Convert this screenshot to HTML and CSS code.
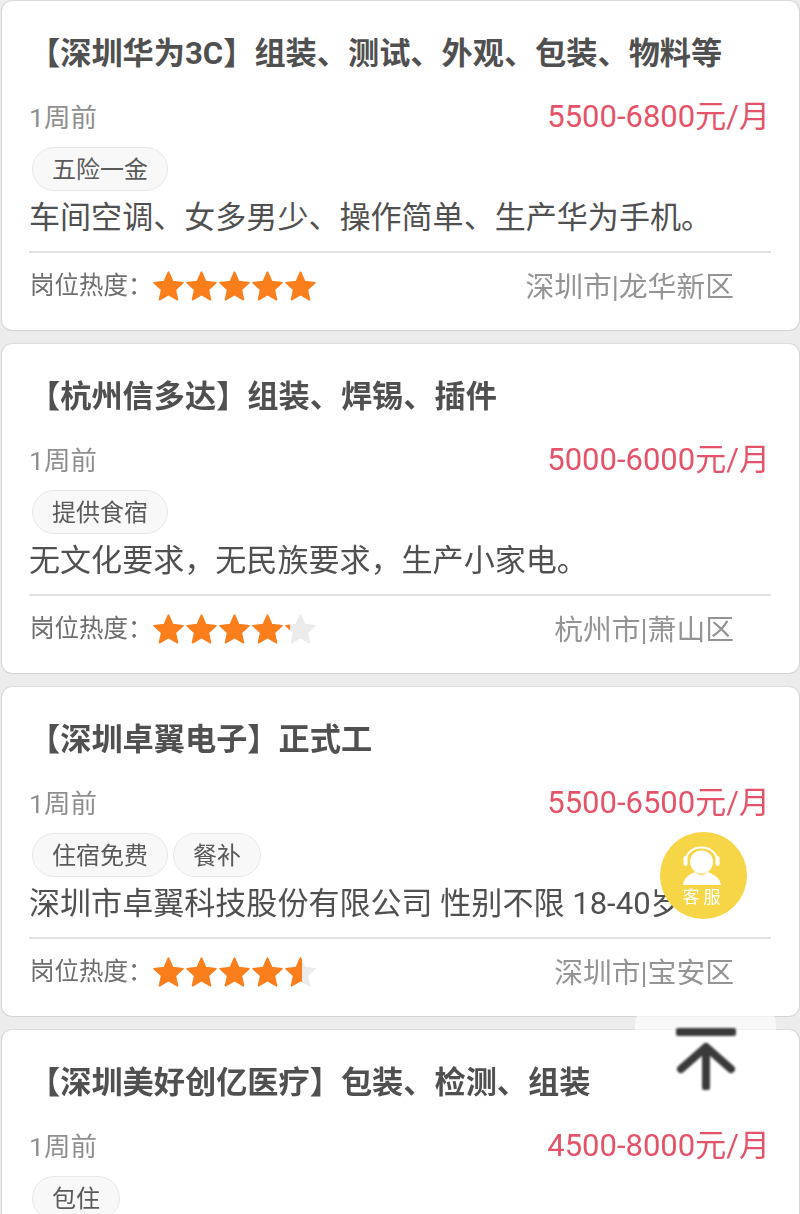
FILE: index.html
```html
<!DOCTYPE html>
<html lang="zh-CN">
<head>
<meta charset="utf-8">
<title>岗位列表</title>
<link rel="stylesheet" href="styles.css">
</head>
<body>
<main class="list">
  <article class="card">
    <h2 class="title">【深圳华为3C】组装、测试、外观、包装、物料等</h2>
    <div class="meta"><span class="time">1周前</span><span class="price">5500-6800元/月</span></div>
    <div class="tags"><span class="tag">五险一金</span></div>
    <p class="desc">车间空调、女多男少、操作简单、生产华为手机。</p>
    <div class="foot">
      <span class="heat">岗位热度：</span>
      <span class="stars"><svg class="star-row" viewBox="0 0 165 32"><use href="#row"/><g clip-path="url(#c100)"><use href="#row" class="on"/></g></svg></span>
      <span class="loc">深圳市|龙华新区</span>
    </div>
  </article>
  <article class="card">
    <h2 class="title">【杭州信多达】组装、焊锡、插件</h2>
    <div class="meta"><span class="time">1周前</span><span class="price">5000-6000元/月</span></div>
    <div class="tags"><span class="tag">提供食宿</span></div>
    <p class="desc">无文化要求，无民族要求，生产小家电。</p>
    <div class="foot">
      <span class="heat">岗位热度：</span>
      <span class="stars"><svg class="star-row" viewBox="0 0 165 32"><use href="#row"/><g clip-path="url(#c80)"><use href="#row" class="on"/></g></svg></span>
      <span class="loc">杭州市|萧山区</span>
    </div>
  </article>
  <article class="card">
    <h2 class="title">【深圳卓翼电子】正式工</h2>
    <div class="meta"><span class="time">1周前</span><span class="price">5500-6500元/月</span></div>
    <div class="tags"><span class="tag">住宿免费</span><span class="tag">餐补</span></div>
    <p class="desc">深圳市卓翼科技股份有限公司 性别不限 18-40岁</p>
    <div class="foot">
      <span class="heat">岗位热度：</span>
      <span class="stars"><svg class="star-row" viewBox="0 0 165 32"><use href="#row"/><g clip-path="url(#c90)"><use href="#row" class="on"/></g></svg></span>
      <span class="loc">深圳市|宝安区</span>
    </div>
  </article>
  <article class="card">
    <h2 class="title">【深圳美好创亿医疗】包装、检测、组装</h2>
    <div class="meta"><span class="time">1周前</span><span class="price">4500-8000元/月</span></div>
    <div class="tags"><span class="tag">包住</span></div>
  </article>
</main>

<svg class="defs" width="0" height="0" aria-hidden="true">
  <defs>
    <path id="s" d="M16.5 2.2 L20.7 11.6 L31 12.7 L23.3 19.6 L25.5 29.7 L16.5 24.5 L7.5 29.7 L9.7 19.6 L2 12.7 L12.3 11.6 Z" stroke-linejoin="round" stroke-width="1.6"/>
    <g id="row">
      <use href="#s"/>
      <use href="#s" x="33"/>
      <use href="#s" x="66"/>
      <use href="#s" x="99"/>
      <use href="#s" x="132"/>
    </g>
    <clipPath id="c100"><rect width="165" height="32"/></clipPath>
    <clipPath id="c80"><rect width="138" height="32"/></clipPath>
    <clipPath id="c90"><rect width="150" height="32"/></clipPath>
  </defs>
</svg>

<aside class="service">
  <svg class="service-icon" viewBox="0 0 41 40">
    <path class="band" d="M3.5 17 C3.5 7 10.5 1.5 19.5 1.5 C28.5 1.5 35.5 7 35.5 17"/>
    <rect x="1.5" y="10" width="4" height="10" rx="2" class="solid"/>
    <rect x="33.5" y="10" width="4" height="10" rx="2" class="solid"/>
    <circle cx="19.5" cy="16" r="11.5" class="solid"/>
    <path class="solid" d="M1 39 C2 31 8 28 13.5 26 C17 30 22 30 25.5 26 C31 28 38 31 39 39 Z"/>
  </svg>
  <span class="service-text">客服</span>
</aside>

<aside class="to-top">
  <svg class="to-top-icon" viewBox="0 0 60 62">
    <path d="M3 4 H57" class="bar"/>
    <path d="M30 59 V19 M5 41 L30 19 L55 41" class="arrow"/>
  </svg>
</aside>
</body>
</html>
```
FILE: styles.css
```css
* { box-sizing: border-box; }
html, body { margin: 0; padding: 0; }
body {
  width: 800px;
  height: 1214px;
  overflow: hidden;
  position: relative;
  background: #ececec;
  font-family: Roboto, "Noto Sans CJK SC", sans-serif;
  filter: blur(0.35px);
}
.list { display: flex; flex-direction: column; gap: 12px; padding: 0 0 0 1px; width: 800px; height: 1214px; overflow: hidden; }
.card {
  width: 799px;
  height: 331px;
  flex: none;
  background: #fff;
  border: 1px solid #d4d4d4;
  border-top-color: #dcdcdc;
  border-radius: 11px;
  padding: 0 27px;
}
.title {
  margin: 32px 0 0;
  font-size: 31.2px;
  line-height: 42px;
  font-weight: 700;
  color: #505050;
  white-space: nowrap;
}
.meta {
  display: flex;
  justify-content: space-between;
  align-items: center;
  margin-top: 19px;
  height: 42px;
}
.time { font-size: 26.5px; color: #8f8f8f; }
.price { font-size: 31px; color: #e5536a; margin: 0 2px 3px 0; }
.tags { display: flex; gap: 5px; margin-top: 11px; padding-left: 3px; }
.tag {
  height: 44px;
  padding: 0 19px;
  font-size: 24px;
  line-height: 44px;
  color: #5a5a5a;
  background: #f8f8f8;
  border: 1px solid #e8e8e8;
  border-radius: 22px;
}
.desc {
  margin: 4px 0 0;
  font-size: 31.05px;
  line-height: 46px;
  color: #505050;
  white-space: nowrap;
  height: 46px;
}
.foot {
  display: flex;
  align-items: center;
  margin-top: 10px;
  border-top: 2px solid #e2e2e2;
  height: 64px;
  padding-right: 37px;
  width: 742px;
}
.heat { font-size: 24.5px; color: #6e6e6e; width: 121.5px; flex: none; position: relative; top: -1px; white-space: nowrap; padding-left: 1px; }
.stars { flex: none; display: flex; margin-top: 4px; }
.star-row { width: 167px; height: 32px; fill: #ebebeb; stroke: #ebebeb; display: block; }
.star-row .on { fill: #fb7e1c; stroke: #fb7e1c; }
.loc { margin-left: auto; font-size: 28.8px; color: #949494; white-space: nowrap; }
.defs { position: absolute; }
.service {
  position: absolute;
  left: 660px;
  top: 832px;
  width: 87px;
  height: 87px;
  border-radius: 50%;
  background: #f6d647;
  display: flex;
  flex-direction: column;
  align-items: center;
  padding-top: 14px;
}
.service-icon { width: 41px; height: 40px; display: block; flex: none; margin-left: -2px; }
.service-icon .band { fill: none; stroke: #fff; stroke-width: 2; }
.service-icon .solid { fill: #fff; }
.service-text {
  font-family: "Noto Sans CJK SC", sans-serif;
  font-size: 17px;
  line-height: 18px;
  letter-spacing: 4px;
  color: #fff;
  margin-top: 1px;
  white-space: nowrap;
}
.to-top {
  position: absolute;
  left: 635px;
  top: 1000px;
  width: 141px;
  height: 118px;
  border-radius: 26px;
  background: rgba(255,255,255,0.62);
  display: flex;
  justify-content: center;
  padding-top: 28px;
}
.to-top-icon { width: 60px; height: 62px; display: block; filter: blur(0.9px); }
.to-top-icon .bar { stroke: #3a3a3a; stroke-width: 8; fill: none; stroke-linecap: round; }
.to-top-icon .arrow { stroke: #3a3a3a; stroke-width: 8; fill: none; stroke-linecap: round; stroke-linejoin: round; }
```
